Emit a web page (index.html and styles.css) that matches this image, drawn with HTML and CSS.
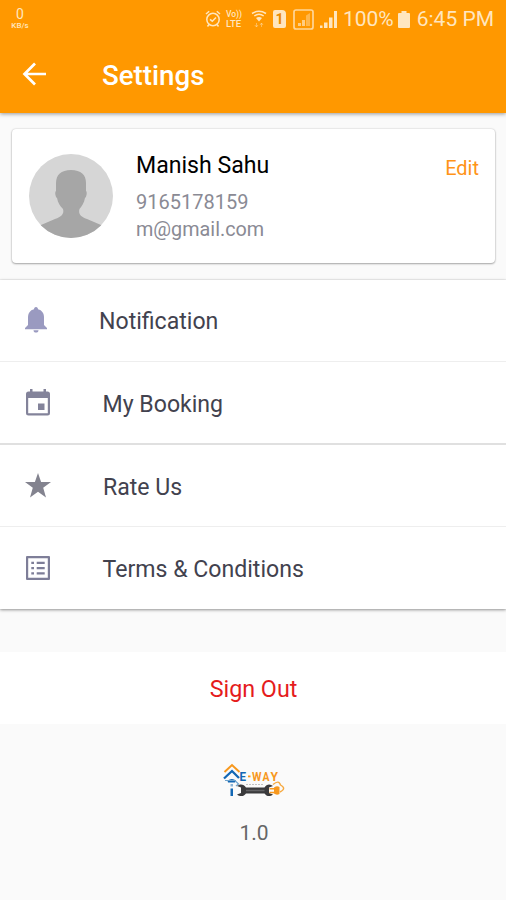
FILE: index.html
```html
<!DOCTYPE html>
<html lang="en">
<head>
    <meta charset="UTF-8">
    <meta name="viewport" content="width=device-width, initial-scale=1.0">
    <title>Settings</title>
    <link rel="stylesheet" href="styles.css">
</head>
<body>

<header class="header">
    <div class="status-bar">
        <div class="net-speed">
            <span class="net-value">0</span>
            <span class="net-unit">KB/s</span>
        </div>
        <div class="status-icons">
            <svg class="icon-alarm" width="16" height="18" viewBox="0 0 16 18" fill="none" stroke="currentColor" stroke-width="1.5">
                <circle cx="8" cy="9.5" r="6.2"/>
                <path d="M1 4L4.2 1.2M15 4L11.8 1.2M5 9.3L7.3 11.2L11 7.5M4 14.5L2.5 16.5M12 14.5L13.5 16.5"/>
            </svg>
            <div class="volte"><span>Vo))</span><span class="lte">LTE</span></div>
            <svg class="icon-wifi" width="16" height="18" viewBox="0 0 16 18" fill="none" stroke="currentColor" stroke-width="1.5">
                <path d="M1 3.5Q8 -1 15 3.5M3.3 6Q8 2.5 12.7 6"/>
                <path d="M5 8Q8 5.8 11 8L8 11.5Z" fill="currentColor" stroke="none"/>
                <path d="M5.5 13V17M3.8 15L5.5 17L7 15M10.5 17V13M9 15L10.5 13L12 15" stroke-width="1" opacity=".45"/>
            </svg>
            <div class="sim">1</div>
            <svg class="icon-signal-box" width="21" height="21" viewBox="0 0 21 21">
                <rect x="1" y="1" width="19" height="19" rx="2" fill="none" stroke="currentColor" stroke-width="1.7"/>
                <path d="M5 17V14H8V17ZM9 17V11H12V17Z" fill="currentColor" opacity=".85"/>
                <path d="M13 17V6.5L17 4V17Z" fill="currentColor" opacity=".5"/>
            </svg>
            <svg class="icon-signal" width="17" height="17" viewBox="0 0 17 17" fill="currentColor">
                <path d="M0 14.5H2.5V17H0ZM4 11.5H7.5V17H4ZM9 6.5H12.5V17H9ZM14 0H17V17H14Z"/>
            </svg>
            <span class="status-text percent">100%</span>
            <svg class="icon-battery" width="12" height="17" viewBox="0 0 12 17" fill="currentColor">
                <path d="M3.5 0H8.5V2H11Q12 2 12 3V16Q12 17 11 17H1Q0 17 0 16V3Q0 2 1 2H3.5Z"/>
            </svg>
            <span class="status-text">6:45 PM</span>
        </div>
    </div>
    <div class="toolbar">
        <svg class="back" width="24" height="24" viewBox="0 0 24 24" fill="none" stroke="#fff" stroke-width="2.7">
            <path d="M24 12H2.5M13 1.5L2.5 12L13 22.5"/>
        </svg>
        <h1 class="title">Settings</h1>
    </div>
</header>

<section class="profile-card">
    <svg class="avatar" width="84" height="84" viewBox="0 0 84 84">
        <defs>
            <clipPath id="avatar-clip"><circle cx="42" cy="42" r="42"/></clipPath>
        </defs>
        <g clip-path="url(#avatar-clip)">
            <rect width="84" height="84" fill="#d6d6d6"/>
            <path d="M42 16C52 16 57 21 57 29V37C58.5 38 57.5 43 56 44C55 49 53 52 50.5 55C49 60 52 63 58 65L72 71L84 84H0L12 71L26 65C32 63 35.5 60 34 55C31 52 29 49 28 44C26.5 43 25.5 38 27 37V29C27 21 32 16 42 16Z" fill="#a6a6a6"/>
        </g>
    </svg>
    <div class="profile-info">
        <div class="name">Manish Sahu</div>
        <div class="contact">9165178159</div>
        <div class="contact email">m@gmail.com</div>
    </div>
    <a class="edit">Edit</a>
</section>

<nav class="menu">
    <a class="menu-item menu-item-bell">
        <svg class="menu-icon" width="22" height="26" viewBox="0 0 22 26" fill="#9a9ac0">
            <path d="M11 0C12.3 0 13 1 13 2.3C17 3.2 19 6.5 19 10.5V18L22 21V22.3H0V21L3 18V10.5C3 6.5 5 3.2 9 2.3C9 1 9.7 0 11 0ZM8.5 23.2H13.5C13.5 24.6 12.5 25.6 11 25.6S8.5 24.6 8.5 23.2Z"/>
        </svg>
        <span>Notification</span>
    </a>
    <a class="menu-item">
        <svg class="menu-icon" width="24" height="27" viewBox="0 0 24 27" fill="#83839a">
            <path fill-rule="evenodd" d="M4 0H6.5V2.5H17.5V0H20V2.5H21.5Q24 2.5 24 5V24Q24 26.5 21.5 26.5H2.5Q0 26.5 0 24V5Q0 2.5 2.5 2.5H4ZM2.2 9V24.3H21.8V9Z"/>
            <rect x="12" y="14.5" width="6.5" height="6.5"/>
        </svg>
        <span>My Booking</span>
    </a>
    <a class="menu-item menu-item-star">
        <svg class="menu-icon" width="26" height="25" viewBox="0 0 26 25" fill="#83838f">
            <path d="M13 0L16.1 9H26L18.2 14.8L21 24.5L13 18.8L5 24.5L7.8 14.8L0 9H9.9Z"/>
        </svg>
        <span>Rate Us</span>
    </a>
    <a class="menu-item">
        <svg class="menu-icon" width="24" height="24" viewBox="0 0 24 24" fill="#7e7e98">
            <path fill-rule="evenodd" d="M1 0H23Q24 0 24 1V23Q24 24 23 24H1Q0 24 0 23V1Q0 0 1 0ZM2.2 2.2V21.8H21.8V2.2Z"/>
            <path d="M5.3 5.8H8V8H5.3ZM10.7 5.8H18.7V8H10.7ZM5.3 11H8V13.2H5.3ZM10.7 11H18.7V13.2H10.7ZM5.3 16.2H8V18.4H5.3ZM10.7 16.2H18.7V18.4H10.7Z"/>
        </svg>
        <span>Terms &amp; Conditions</span>
    </a>
</nav>

<a class="sign-out">Sign Out</a>

<footer class="footer">
    <svg class="logo" width="64" height="38" viewBox="0 0 64 38">
        <path d="M3.5 10L11 3L18.5 10" fill="none" stroke="#f7981d" stroke-width="2"/>
        <path d="M3 16.5L11 9L18 16" fill="none" stroke="#1267b4" stroke-width="2.3"/>
        <path d="M6.5 18.5Q11 15.5 15 18.5L14 20.5H7Z" fill="#1267b4"/>
        <path d="M4 18.5H14L17.5 22L15 24" fill="none" stroke="#6fa3cd" stroke-width="1.2"/>
        <rect x="9.5" y="22" width="2.5" height="2.5" fill="#8ab4d8"/>
        <rect x="9.5" y="26.5" width="2.5" height="7.5" fill="#1267b4"/>
        <text class="logo-text" x="18.5" y="18.5" textLength="6.5" lengthAdjust="spacingAndGlyphs" fill="#1267b4">E</text>
        <rect x="27" y="13.5" width="2.5" height="1.8" fill="#f7981d"/>
        <text class="logo-text" x="31" y="18.5" textLength="9.5" lengthAdjust="spacingAndGlyphs" fill="#f7981d">W</text>
        <text class="logo-text" x="41.5" y="18.5" textLength="7" lengthAdjust="spacingAndGlyphs" fill="#f7981d">A</text>
        <text class="logo-text" x="49.5" y="18.5" textLength="7.5" lengthAdjust="spacingAndGlyphs" fill="#f7981d">Y</text>
        <path d="M25 22.5H43" stroke="#c2c2c2" stroke-width="1" stroke-dasharray="2 1"/>
        <path d="M16 24C19 21.5 23 22 25 25.5H43.5C45.5 22 49 21.5 52 24L48 25.5V31L52 32.5C49 35 45.5 34.5 43.5 31.5H25C23 34.5 19 35 16 32.5L20 31V25.5Z" fill="#3a3a3c"/>
        <path d="M25 28.5H43.5" stroke="#646466" stroke-width="1.5"/>
        <path d="M53 25.5Q56 23.5 58.5 25V32Q55.5 33.5 53 31.5Z" fill="#f7981d"/>
        <path d="M48.5 26.7H53M48.5 30.5H53" stroke="#f7981d" stroke-width="1.4"/>
        <path d="M52 22.5Q58 17.5 59.5 23Q66 26.5 59 30" fill="none" stroke="#f7a93f" stroke-width="1.4"/>
    </svg>
    <div class="version">1.0</div>
</footer>

</body>
</html>
```

FILE: styles.css
```css
* {
    box-sizing: border-box;
}

body {
    margin: 0;
    min-height: 900px;
    background-color: #fafafa;
    font-family: Roboto, sans-serif;
    overflow: hidden;
}

svg {
    display: block;
    flex-shrink: 0;
}

.header {
    height: 113px;
    background-color: #ff9800;
    color: #fff;
    box-shadow: 0 1px 4px rgba(0, 0, 0, 0.4);
}

/* Status bar */
.status-bar {
    display: flex;
    justify-content: space-between;
    height: 38px;
    padding: 0 12px 0 9px;
    color: #ffe6bf;
}

.net-speed {
    display: flex;
    flex-direction: column;
    align-items: center;
    width: 22px;
    padding-top: 7px;
}

.net-value {
    font-size: 14px;
    line-height: 15px;
}

.net-unit {
    font-size: 8px;
    line-height: 8px;
    font-weight: 500;
}

.status-icons {
    display: flex;
    align-items: center;
}

.icon-alarm {
    margin-right: 5px;
}

.volte {
    display: flex;
    flex-direction: column;
    width: 18px;
    margin-right: 7px;
    font-size: 8.5px;
    line-height: 9px;
    font-weight: 500;
}

.lte {
    font-size: 9.5px;
}

.icon-wifi {
    margin-right: 6px;
}

.sim {
    width: 13px;
    height: 18px;
    margin-right: 7px;
    border-radius: 2px 4px 2px 2px;
    background-color: #ffe6bf;
    color: #e98a00;
    font-size: 14px;
    line-height: 18px;
    font-weight: 700;
    text-align: center;
}

.icon-signal-box {
    margin-right: 6px;
    opacity: 0.8;
}

.icon-signal {
    margin-right: 7px;
}

.status-text {
    font-size: 21px;
    line-height: 38px;
}

.percent {
    margin-right: 4px;
    margin-left: -1px;
}

.icon-battery {
    margin-right: 7px;
}

/* Toolbar */
.toolbar {
    display: flex;
    align-items: center;
    height: 72px;
    padding-left: 22px;
}

.back {
    margin-right: 56px;
}

.title {
    margin: 2px 0 0;
    font-size: 27.7px;
    font-weight: 500;
}

/* Profile card */
.profile-card {
    display: flex;
    height: 134px;
    margin: 15.5px 11px 0 12px;
    padding: 25px 16px 0 17px;
    border-radius: 4px;
    background-color: #fff;
    box-shadow: 0 0 2px rgba(0, 0, 0, 0.2), 0 1px 2px rgba(0, 0, 0, 0.3);
}

.profile-info {
    flex: 1;
    margin: -3px 0 0 23px;
}

.name {
    color: #000;
    font-size: 23.1px;
    line-height: 30px;
    margin-bottom: 8.5px;
}

.contact {
    color: #8a8a94;
    font-size: 20px;
    line-height: 27px;
}

.email {
    font-size: 19.8px;
}

.edit {
    margin-top: -1px;
    color: #ff9418;
    font-size: 20px;
    line-height: 30px;
}

/* Menu */
.menu {
    margin-top: 17px;
    background-color: #fff;
    box-shadow: 0 0 1px rgba(0, 0, 0, 0.2), 0 1px 3px rgba(0, 0, 0, 0.4);
}

.menu-item {
    display: flex;
    align-items: center;
    height: 82.5px;
    padding: 1px 0 0 38px;
    border-bottom: 1px solid #eee;
    color: #42424e;
    font-size: 23.1px;
}

.menu-item:last-child {
    height: 82px;
    padding-top: 0;
    border-bottom: none;
}

.menu-item:nth-child(2) {
    border-bottom: 2px solid #e0e0e0;
}

.menu-icon {
    transform: translateX(-50%);
}

.menu-item span {
    margin-top: 3px;
    margin-left: 40.5px;
}

.menu-item-bell {
    padding: 0 0 0 36px;
}

.menu-item-bell span {
    margin-left: 41px;
}

.menu-item-star span {
    margin-left: 39px;
}

.sign-out {
    display: block;
    height: 72px;
    margin-top: 43px;
    background-color: #fff;
    color: #e51c1c;
    font-size: 23.3px;
    line-height: 74px;
    text-align: center;
    text-indent: 1px;
}

/* Footer */
.footer {
    display: flex;
    flex-direction: column;
    align-items: center;
    padding-top: 38px;
}

.logo-text {
    font-size: 13.5px;
    font-weight: 700;
}

.version {
    margin-top: 19px;
    padding-left: 2px;
    color: #666;
    font-size: 21px;
    line-height: 28px;
}
```
